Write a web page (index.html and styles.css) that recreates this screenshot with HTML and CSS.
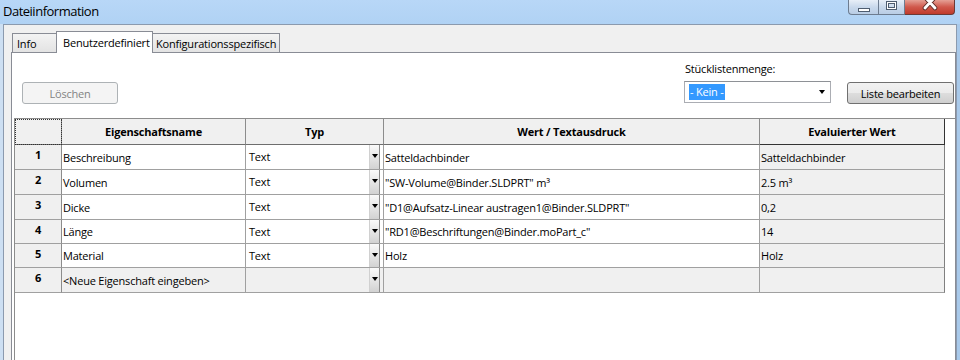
FILE: index.html
```html
<!DOCTYPE html>
<html lang="de">
<head>
  <meta charset="UTF-8">
  <title>Dateiinformation</title>
  <link rel="stylesheet" href="styles.css">
</head>
<body>
  <div class="window">
    <!-- Title bar -->
    <div class="titlebar">
      <span class="title">Dateiinformation</span>
      <div class="caption">
        <span class="cap cap-min"><span class="min-glyph"></span></span>
        <span class="cap cap-max"><span class="max-glyph"></span></span>
        <span class="cap cap-close">
          <svg width="48" height="14" viewBox="0 0 48 14">
            <path d="M19 -3 L29 8 M29 -3 L19 8" stroke="#5a2a26" stroke-width="4.6" stroke-linecap="round" fill="none"/>
            <path d="M19 -3 L29 8 M29 -3 L19 8" stroke="#fff" stroke-width="2.8" stroke-linecap="round" fill="none"/>
          </svg>
        </span>
      </div>
    </div>

    <div class="client">
      <!-- Tabs -->
      <div class="tabs">
        <div class="tab tab-info">Info</div>
        <div class="tab tab-active">Benutzerdefiniert</div>
        <div class="tab tab-config">Konfigurationsspezifisch</div>
      </div>

      <div class="panel">
        <div class="toolbar">
          <button class="btn btn-delete" disabled>Löschen</button>
          <div class="bom">
            <div class="bom-label">Stücklistenmenge:</div>
            <div class="combo">
              <span class="combo-sel">- Kein -</span>
              <span class="arrow"></span>
            </div>
          </div>
          <button class="btn btn-edit">Liste bearbeiten</button>
        </div>

        <!-- Property grid -->
        <div class="grid-area">
          <table class="grid">
            <colgroup>
              <col class="c-num">
              <col class="c-name">
              <col class="c-type">
              <col class="c-value">
              <col class="c-eval">
            </colgroup>
            <thead>
              <tr>
                <th class="corner"></th>
                <th>Eigenschaftsname</th>
                <th>Typ</th>
                <th>Wert / Textausdruck</th>
                <th class="last">Evaluierter Wert</th>
              </tr>
            </thead>
            <tbody>
              <tr>
                <td class="num">1</td>
                <td class="name">Beschreibung</td>
                <td class="type"><div class="type-box"><span class="type-text">Text</span><span class="drop"></span></div></td>
                <td class="value">Satteldachbinder</td>
                <td class="eval">Satteldachbinder</td>
              </tr>
              <tr>
                <td class="num">2</td>
                <td class="name">Volumen</td>
                <td class="type"><div class="type-box"><span class="type-text">Text</span><span class="drop"></span></div></td>
                <td class="value">"SW-Volume@Binder.SLDPRT" m³</td>
                <td class="eval">2.5 m³</td>
              </tr>
              <tr>
                <td class="num">3</td>
                <td class="name">Dicke</td>
                <td class="type"><div class="type-box"><span class="type-text">Text</span><span class="drop"></span></div></td>
                <td class="value">"D1@Aufsatz-Linear austragen1@Binder.SLDPRT"</td>
                <td class="eval">0,2</td>
              </tr>
              <tr class="short">
                <td class="num">4</td>
                <td class="name">Länge</td>
                <td class="type"><div class="type-box"><span class="type-text">Text</span><span class="drop"></span></div></td>
                <td class="value">"RD1@Beschriftungen@Binder.moPart_c"</td>
                <td class="eval">14</td>
              </tr>
              <tr class="short">
                <td class="num">5</td>
                <td class="name">Material</td>
                <td class="type"><div class="type-box"><span class="type-text">Text</span><span class="drop"></span></div></td>
                <td class="value">Holz</td>
                <td class="eval">Holz</td>
              </tr>
              <tr class="new-row">
                <td class="num">6</td>
                <td class="name">&lt;Neue Eigenschaft eingeben&gt;</td>
                <td class="type"><div class="type-box"><span class="type-text"></span><span class="drop"></span></div></td>
                <td class="value"></td>
                <td class="eval"></td>
              </tr>
            </tbody>
          </table>
        </div>
      </div>
    </div>
  </div>
</body>
</html>
```

FILE: styles.css
```css
/* General */
body {
  margin: 0;
  width: 960px;
  height: 360px;
  overflow: hidden;
  font-family: "Open Sans", "Noto Sans", sans-serif;
  font-size: 11px;
  letter-spacing: -0.2px;
  color: #000;
  background: #b4d4f5;
}

/* Window frame */
.window {
  box-sizing: border-box;
  height: 360px;
  display: flex;
  flex-direction: column;
  padding: 0 3px;
  background: linear-gradient(to right, #cddff2 0, #cddff2 3px, #b4d4f5 3px, #b4d4f5 957px, #a9c9ea 957px);
}

/* Title bar */
.titlebar {
  height: 24px;
  margin: 0 -3px;
  padding: 0 5px 0 3px;
  display: flex;
  justify-content: space-between;
  align-items: flex-start;
  background: linear-gradient(to bottom, #b8d7f7, #b0d2f4);
}

.title {
  font-size: 13px;
  letter-spacing: -0.5px;
  line-height: 22px;
}

.caption {
  display: flex;
}

.cap {
  box-sizing: border-box;
  height: 15px;
  display: flex;
  justify-content: center;
  border: 1px solid #6d7c90;
  border-top: none;
  background: linear-gradient(to bottom, #e8eff8, #c9d9ec 50%, #b9cde5);
}

.cap-min {
  width: 30px;
  border-bottom-left-radius: 4px;
  border-right: none;
}

.cap-max {
  width: 27px;
}

.cap-close {
  width: 50px;
  border-left: none;
  border-color: #6b3a36;
  border-bottom-right-radius: 4px;
  background: linear-gradient(to bottom, #e5a095, #d0584b 50%, #c03b2c);
}

.min-glyph {
  box-sizing: border-box;
  width: 12px;
  height: 4px;
  margin-top: 8px;
  background: #fff;
  border: 1px solid #4e5d70;
}

.max-glyph {
  box-sizing: border-box;
  width: 11px;
  height: 9px;
  margin-top: 1px;
  border: 1px solid #4e5d70;
  box-shadow: inset 0 0 0 1px #fff, inset 0 0 0 2px #4e5d70;
}

/* Client area */
.client {
  flex: 1;
  display: flex;
  flex-direction: column;
  background: #f0f0f0;
  border: 1px solid #8b9aae;
  border-bottom: none;
}

/* Tabs */
.tabs {
  display: flex;
  align-items: flex-end;
  padding: 6px 0 0 8px;
}

.tab {
  box-sizing: border-box;
  height: 19px;
  padding-top: 2px;
  line-height: 15px;
  border: 1px solid #898c95;
  border-bottom: none;
  background: linear-gradient(to bottom, #f3f3f3, #e3e3e3);
  white-space: nowrap;
}

.tab-info {
  width: 44px;
  padding-left: 4px;
  border-right: none;
}

.tab-active {
  position: relative;
  width: 97px;
  height: 22px;
  margin-bottom: -1px;
  padding-left: 6px;
  padding-top: 3px;
  background: #fff;
}

.tab-config {
  width: 127px;
  padding-left: 3px;
  border-left: none;
}

/* Panel */
.panel {
  flex: 1;
  display: flex;
  flex-direction: column;
  margin-left: 7px;
  background: #fff;
  border: 1px solid #898c95;
  border-bottom: none;
}

.toolbar {
  display: flex;
  align-items: flex-end;
  padding: 8px 1px 0 10px;
  margin-bottom: 14px;
}

.btn {
  box-sizing: border-box;
  height: 22px;
  font-family: inherit;
  font-size: 11px;
  letter-spacing: -0.2px;
  color: #000;
  border: 1px solid #707070;
  border-radius: 3px;
  background: linear-gradient(to bottom, #f2f2f2, #ebebeb 50%, #dddddd 51%, #cfcfcf);
  padding: 0;
}

.btn-delete {
  width: 96px;
  color: #838383;
  border-color: #adb2b5;
  background: #f4f4f4;
}

.btn-edit {
  width: 107px;
}

.bom {
  margin-left: auto;
  margin-right: 16px;
  margin-bottom: 1px;
}

.bom-label {
  line-height: 16px;
  margin-bottom: 4px;
  padding-left: 1px;
}

.combo {
  box-sizing: border-box;
  width: 147px;
  height: 22px;
  display: flex;
  align-items: center;
  padding-left: 4px;
  border: 1px solid #abadb3;
  border-top-color: #8e9196;
}

.combo-sel {
  line-height: 16px;
  padding: 0 1px;
  color: #fff;
  background: #3399ff;
}

.arrow {
  margin-left: auto;
  margin-right: 5px;
  width: 0;
  height: 0;
  border-left: 3.5px solid transparent;
  border-right: 3.5px solid transparent;
  border-top: 4px solid #000;
}

/* Grid */
.grid-area {
  flex: 1;
  margin-left: 2px;
  border-left: 1px solid #8c8c8c;
  border-top: 1px solid #8c8c8c;
}

.grid {
  table-layout: fixed;
  border-collapse: separate;
  border-spacing: 0;
  width: 930px;
}

.c-num { width: 47px; }
.c-name { width: 184px; }
.c-type { width: 138px; }
.c-value { width: 376px; }
.c-eval { width: 185px; }

.grid th {
  box-sizing: border-box;
  height: 26px;
  padding: 0;
  font-weight: bold;
  text-align: center;
  background: #f0f0f0;
  border-right: 1px solid #8c8c8c;
  border-bottom: 1px solid #6e6e6e;
}

.grid th.corner {
  outline: 1px dotted #333;
  outline-offset: -1px;
}

.grid th.last {
  border-right-color: #333;
  border-bottom-color: #333;
}

.grid td {
  box-sizing: border-box;
  height: 25px;
  padding: 0 1px;
  white-space: nowrap;
  overflow: hidden;
  border-right: 1px solid #a0a0a0;
  border-bottom: 1px solid #a0a0a0;
  background: #fff;
}

.grid .short td {
  height: 24px;
}

.grid td.num {
  vertical-align: top;
  padding-top: 2px;
  font-weight: bold;
  text-align: center;
  background: #f0f0f0;
  border-right-color: #8c8c8c;
}

.grid td.type {
  padding: 0 3px 0 3px;
}

.grid td.eval {
  background: #f0f0f0;
  border-right-color: #808080;
}

.grid .new-row td {
  background: #f0f0f0;
}

.type-box {
  display: flex;
  align-items: stretch;
  height: 24px;
}

.short .type-box {
  height: 23px;
}

.type-text {
  flex: 1;
  line-height: 24px;
}

.drop {
  box-sizing: border-box;
  width: 11px;
  display: flex;
  justify-content: center;
  padding-top: 9px;
  border-left: 1px solid #d0d0d0;
  border-right: 1px solid #8a8a8a;
  background: linear-gradient(to bottom, #fafafa, #e6e6e6 50%, #d2d2d2);
}

.drop::after {
  content: "";
  width: 0;
  height: 0;
  border-left: 3.5px solid transparent;
  border-right: 3.5px solid transparent;
  border-top: 4px solid #000;
}
```
